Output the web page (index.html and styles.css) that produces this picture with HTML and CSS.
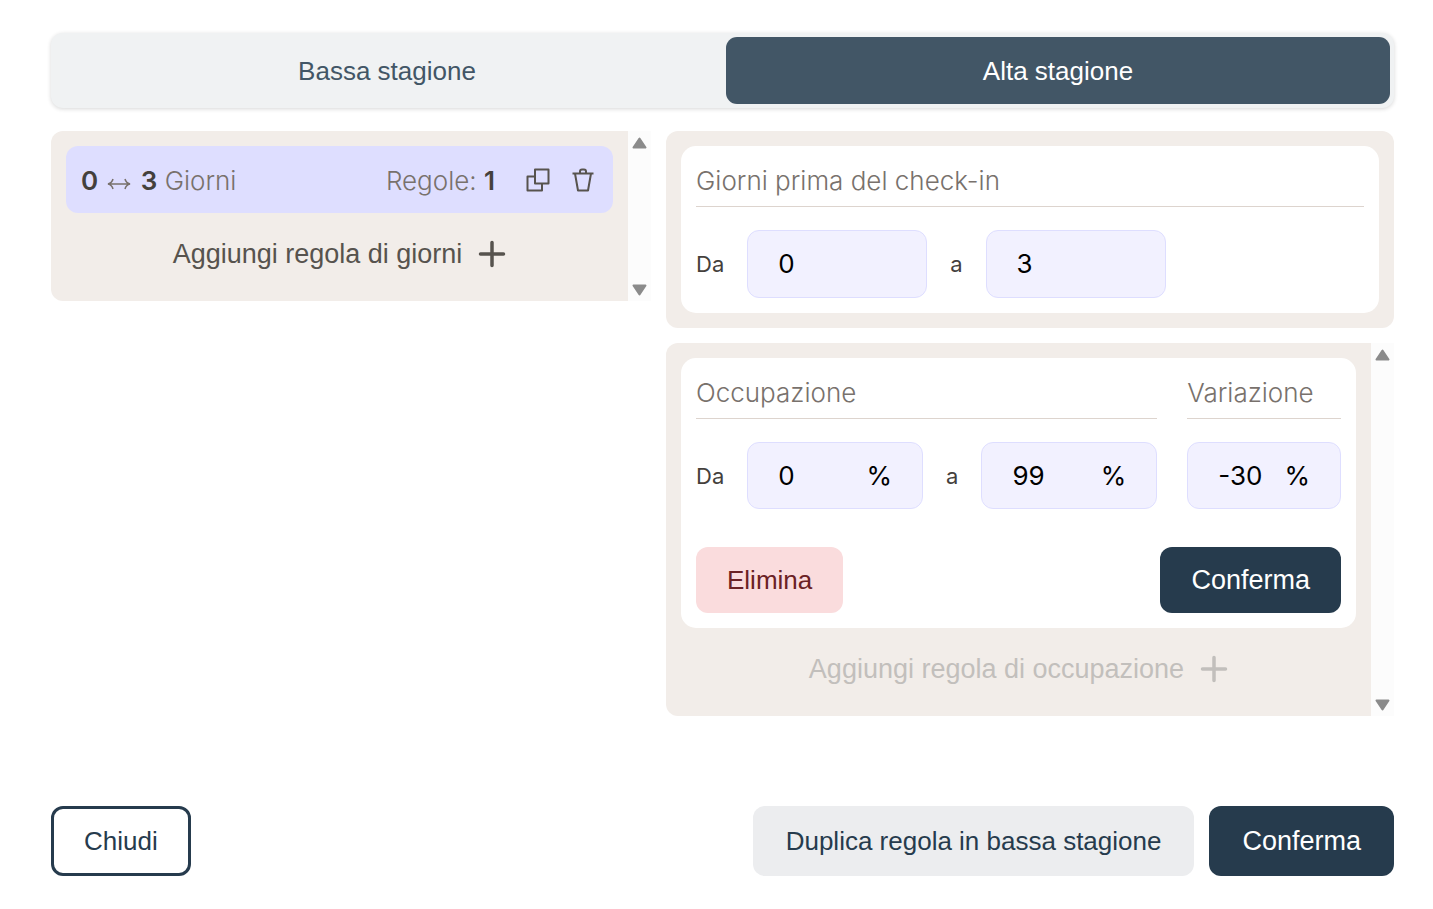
FILE: index.html
```html
<!DOCTYPE html>
<html lang="it">
<head>
<meta charset="utf-8">
<meta name="viewport" content="width=device-width, initial-scale=1">
<title>Regole stagione</title>
<link rel="stylesheet" href="styles.css">
</head>
<body>
<main class="page">
  <div class="tabs" role="tablist">
    <button class="tab" type="button" role="tab" aria-selected="false">Bassa stagione</button>
    <button class="tab tab-active" type="button" role="tab" aria-selected="true">Alta stagione</button>
  </div>

  <div class="columns">
    <section class="scroller">
      <div class="pane">
        <div class="rule">
          <span class="rule-days"><b>0</b> <svg class="range" viewBox="0 0 24 12" aria-hidden="true"><path d="M1 6H23M6 1Q5 5 1 6Q5 7 6 11M18 1Q19 5 23 6Q19 7 18 11"/></svg> <b>3</b> Giorni</span>
          <span class="rule-count">Regole: <b>1</b></span>
          <button class="icon-button" type="button" aria-label="Duplica">
            <svg class="icon" viewBox="0 0 24 24"><path d="M9 1.500H22.500V15.500H9ZM9 8.500H1.500V22.500H16V15.500"/></svg>
          </button>
          <button class="icon-button" type="button" aria-label="Elimina giorni">
            <svg class="icon" viewBox="0 0 24 24"><path d="M1.500 5.500H22.500M4 5.500L7 22.500H17L20 5.500M9 5.500V3.500Q9 1.500 11 1.500H13Q15 1.500 15 3.500V5.500"/></svg>
          </button>
        </div>
        <button class="add" type="button">Aggiungi regola di giorni
          <svg class="plus" viewBox="0 0 28 28" aria-hidden="true"><path d="M14 2.500V25.500M2.500 14H25.500"/></svg>
        </button>
      </div>
      <div class="track" aria-hidden="true">
        <svg class="arrow" viewBox="0 0 15 12"><path d="M7.500 1.500L13.500 10.500H1.500Z"/></svg>
        <svg class="arrow" viewBox="0 0 15 12"><path d="M7.500 10.500L13.500 1.500H1.500Z"/></svg>
      </div>
    </section>

    <div class="details">
      <section class="panel">
        <div class="card">
          <h2 class="heading">Giorni prima del check-in</h2>
          <div class="fields">
            <label class="small" for="day-from">Da</label>
            <span class="box box-day"><input class="value" id="day-from" type="text" value="0"></span>
            <label class="small" for="day-to">a</label>
            <span class="box box-day"><input class="value" id="day-to" type="text" value="3"></span>
          </div>
        </div>
      </section>

      <section class="scroller">
        <div class="pane">
          <div class="card">
            <div class="groups">
              <div>
                <h2 class="heading">Occupazione</h2>
                <div class="fields">
                  <label class="small" for="occ-from">Da</label>
                  <span class="box"><input class="value" id="occ-from" type="text" value="0"><span>%</span></span>
                  <label class="small" for="occ-to">a</label>
                  <span class="box"><input class="value" id="occ-to" type="text" value="99"><span>%</span></span>
                </div>
              </div>
              <div>
                <h2 class="heading"><label for="variation">Variazione</label></h2>
                <div class="fields">
                  <span class="box"><input class="value" id="variation" type="text" value="-30"><span>%</span></span>
                </div>
              </div>
            </div>
            <div class="card-actions">
              <button class="button danger" type="button">Elimina</button>
              <button class="button primary" type="button">Conferma</button>
            </div>
          </div>
          <button class="add" type="button" disabled>Aggiungi regola di occupazione
            <svg class="plus" viewBox="0 0 28 28" aria-hidden="true"><path d="M14 2.500V25.500M2.500 14H25.500"/></svg>
          </button>
        </div>
        <div class="track" aria-hidden="true">
          <svg class="arrow" viewBox="0 0 15 12"><path d="M7.500 1.500L13.500 10.500H1.500Z"/></svg>
          <svg class="arrow" viewBox="0 0 15 12"><path d="M7.500 10.500L13.500 1.500H1.500Z"/></svg>
        </div>
      </section>
    </div>
  </div>

  <footer class="footer">
    <button class="button large outline" type="button">Chiudi</button>
    <span class="footer-right">
      <button class="button large muted" type="button">Duplica regola in bassa stagione</button>
      <button class="button large primary" type="button">Conferma</button>
    </span>
  </footer>
</main>
</body>
</html>
```
FILE: styles.css
```css
* { box-sizing: border-box; }
body {
  margin: 0;
  background: #fff;
  color: #44403c;
  font: 400 26px/38px Inter, "Liberation Sans", sans-serif;
}
button, input { font: inherit; color: inherit; margin: 0; }
button {
  border: 0;
  background: none;
  cursor: pointer;
  white-space: nowrap;
  font-family: "Liberation Sans", Arial, sans-serif;
}
.page {
  min-height: 100vh;
  padding: 33px 39px 33px 51px;
  display: flex;
  flex-direction: column;
}
.tabs {
  display: grid;
  grid-template-columns: 1fr 1fr;
  gap: 7px;
  padding: 4px;
  border-radius: 12px;
  background: #f0f2f3;
  box-shadow: 0 1px 4px rgba(0, 0, 0, 0.16);
}
.tab { height: 67px; border-radius: 11px; color: #425666; }
.tab-active { background: #425666; color: #fff; }
.columns {
  display: grid;
  grid-template-columns: minmax(0, 600fr) minmax(0, 728fr);
  gap: 15px;
  align-items: start;
  margin-top: 23px;
}
.details { display: grid; gap: 15px; }
.scroller { display: flex; border-radius: 12px 0 0 12px; overflow: hidden; }
.pane { flex: 1; min-width: 0; padding: 15px 15px 6px; background: #f2ede9; }
.track {
  width: 23px;
  padding: 6px 0 5px;
  display: flex;
  flex-direction: column;
  justify-content: space-between;
  align-items: center;
  background: #fcfcfc;
}
.arrow { width: 15px; height: 12px; fill: #8b8b8b; stroke: #8b8b8b; stroke-width: 2; stroke-linejoin: round; }
.rule {
  display: flex;
  align-items: center;
  height: 67px;
  padding: 0 15px;
  border-radius: 12px;
  background: #dedeff;
  color: #78716c;
  font-weight: 300;
  white-space: nowrap;
}
.rule b { color: #44403c; font-weight: 600; }
.rule-days, .rule-count { padding-top: 2px; }
.rule-days { flex: 1; }
.range { width: 24px; height: 12px; margin: 0 2px; fill: none; stroke: #78716c; stroke-width: 1.5; }
.rule-count { margin-right: 28px; }
.icon-button { display: flex; padding: 3px; }
.icon-button + .icon-button { margin-left: 15px; }
.icon { width: 24px; height: 24px; fill: none; stroke: #57534e; stroke-width: 2; stroke-linejoin: round; }
.add {
  display: flex;
  align-items: center;
  justify-content: center;
  gap: 16px;
  width: 100%;
  height: 82px;
  color: #57534e;
  font-size: 27px;
}
.add:disabled { color: #c2bfbc; cursor: default; }
.plus { width: 28px; height: 28px; fill: none; stroke: currentColor; stroke-width: 3.5; stroke-linecap: round; }
.panel { padding: 15px; border-radius: 12px; background: #f2ede9; }
.card { padding: 15px; border-radius: 15px; background: #fff; }
.heading {
  margin: 0 0 23px;
  padding-bottom: 5px;
  border-bottom: 1px solid #ddd4ce;
  color: #78716c;
  font-size: 26px;
  line-height: 40px;
  font-weight: 300;
}
.fields { display: flex; align-items: center; gap: 23px; }
.small { font-size: 22px; }
.box {
  flex: 1;
  min-width: 0;
  display: flex;
  align-items: center;
  height: 67px;
  padding: 0 30px;
  border: 1px solid #dedeff;
  border-radius: 12px;
  background: #f2f1ff;
  color: #000;
}
.box-day { flex: none; width: 180px; height: 68px; }
.value { flex: 1; min-width: 0; width: 0; padding: 0; border: 0; background: none; outline: 0; }
.groups { display: grid; grid-template-columns: 3fr 1fr; gap: 30px; }
.card-actions { display: flex; justify-content: space-between; margin-top: 38px; }
.button { height: 66px; padding: 0 31px; border-radius: 12px; }
.large { height: 70px; padding: 0 33px; }
.danger { background: #fadcdd; color: #6b2124; }
.primary { background: #263b4d; color: #fff; font-size: 27px; }
.muted { background: #ecedef; color: #263b4d; }
.outline { padding: 0 30px; border: 3px solid #263b4d; background: #fff; color: #263b4d; }
.footer { display: flex; justify-content: space-between; margin-top: auto; padding-top: 30px; }
.footer-right { display: flex; gap: 15px; }
```
